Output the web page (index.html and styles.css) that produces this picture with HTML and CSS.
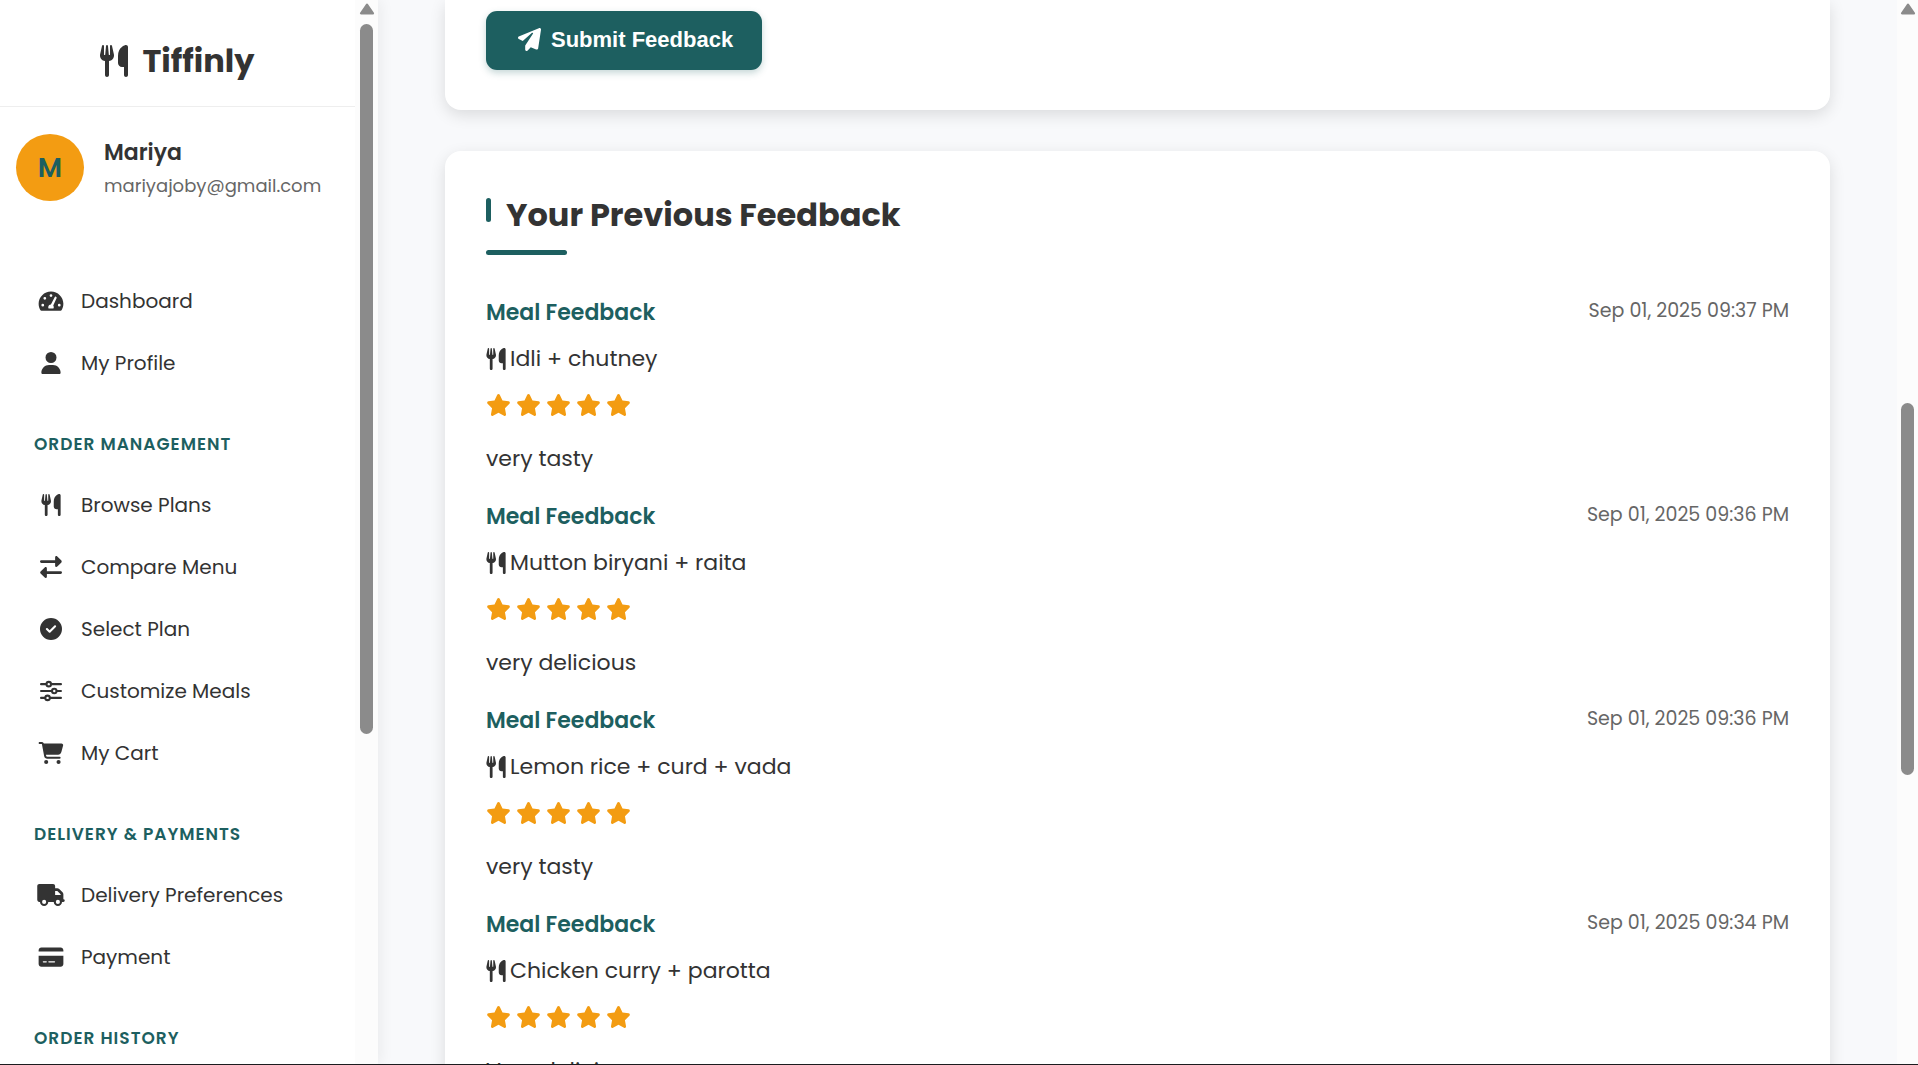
FILE: index.html
```html
<!DOCTYPE html>
<html lang="en">
<head>
<meta charset="utf-8">
<title>Tiffinly - Feedback</title>
<link rel="stylesheet" href="styles.css">
</head>
<body>
<svg class="sprite" aria-hidden="true">
  <symbol id="utensils" viewBox="0 0 448 512"><path d="M416 0C400 0 288 32 288 176V288c0 35.300 28.700 64 64 64h32V480c0 17.700 14.300 32 32 32s32-14.300 32-32V32c0-17.700-14.300-32-32-32zM64 16C64 7.800 57.900 1 49.700 .1S34.200 4.600 32.400 12.500L2.100 148.800C.7 155.100 0 161.500 0 167.900c0 45.900 35.100 83.600 80 87.700V480c0 17.700 14.300 32 32 32s32-14.300 32-32V255.600c44.900-4.100 80-41.800 80-87.700c0-6.400-.7-12.800-2.100-19.100L191.600 12.500c-1.800-8-9.300-13.300-17.400-12.400S160 7.800 160 16V150.200c0 5.400-4.400 9.800-9.800 9.800c-5.100 0-9.300-3.900-9.800-9L127.900 14.600C127.200 6.300 120.300 0 112 0s-15.200 6.300-15.900 14.600L83.700 151c-.5 5.100-4.700 9-9.800 9c-5.400 0-9.800-4.400-9.800-9.800V16z"/></symbol>
  <symbol id="gauge" viewBox="0 0 576 512"><path fill-rule="evenodd" d="M288 32C129 32 0 161 0 320c0 53 14 102 39 145 6 10 16 15 27 15h444c11 0 21-5 27-15 25-43 39-92 39-145C576 161 447 32 288 32zm0 64a32 32 0 1 1 0 64 32 32 0 0 1 0-64zM96 384a32 32 0 1 1 0-64 32 32 0 0 1 0 64zm48-160a32 32 0 1 1 0-64 32 32 0 0 1 0 64zm336 96a32 32 0 1 1 0 64 32 32 0 0 1 0-64zM404 157c13 6 19 20 13 33l-77 172c8 10 12 22 12 38 0 12-3 22-9 32H233c-6-10-9-20-9-32 0-34 27-62 62-64l87-170c6-12 19-15 31-9z"/></symbol>
  <symbol id="user" viewBox="0 0 448 512"><path d="M224 256a128 128 0 1 0 0-256 128 128 0 0 0 0 256zm-46 48C80 304 0 384 0 482c0 17 13 30 30 30h388c17 0 30-13 30-30 0-98-80-178-178-178z"/></symbol>
  <symbol id="exchange" viewBox="0 0 512 512"><path d="M32 96h320V32c0-26 32-39 50-22l96 96c9 9 9 35 0 44l-96 96c-18 17-50 5-50-22v-64H32a32 32 0 0 1 0-64zM480 352H160v-64c0-26-32-39-50-22l-96 96c-13 13-13 31 0 44l96 96c18 17 50 5 50-22v-64h320a32 32 0 0 0 0-64z"/></symbol>
  <symbol id="check" viewBox="0 0 512 512"><path fill-rule="evenodd" d="M256 512a256 256 0 1 0 0-512 256 256 0 0 0 0 512zm113-303L241 337c-9 9-25 9-34 0l-64-64c-22-23 11-56 34-34l47 47 111-111c23-22 56 11 34 34z"/></symbol>
  <symbol id="sliders" viewBox="0 0 512 512"><g fill="none" stroke="currentColor" stroke-width="48" stroke-linecap="round"><path d="M24 96h112M272 96h216M24 256h240M400 256h88M24 416h88M240 416h248"/><circle cx="204" cy="96" r="52"/><circle cx="332" cy="256" r="52"/><circle cx="176" cy="416" r="52"/></g></symbol>
  <symbol id="cart" viewBox="0 0 576 512"><path d="M0 24C0 11 11 0 24 0h46c22 0 42 13 51 32h411c26 0 45 25 38 50l-41 152c-9 36-41 61-77 61H171l5 29c2 11 12 19 24 19h288a24 24 0 0 1 0 48H200c-35 0-65-25-71-58L77 54c-1-4-4-6-7-6H24C11 48 0 37 0 24zM128 464a48 48 0 1 1 96 0 48 48 0 0 1-96 0zm288 0a48 48 0 1 1 96 0 48 48 0 0 1-96 0z"/></symbol>
  <symbol id="truck" viewBox="0 0 640 512"><path fill-rule="evenodd" d="M48 0h320c27 0 48 21 48 48v48h51c17 0 33 7 45 19l77 77c12 12 19 28 19 45v115a32 32 0 0 1 0 64h-32a96 96 0 0 1-192 0H256a96 96 0 0 1-192 0H48c-27 0-48-21-48-48V48C0 21 21 0 48 0zm368 160v96h128v-19l-77-77zM160 368a48 48 0 1 0 0 96 48 48 0 0 0 0-96zm320 0a48 48 0 1 0 0 96 48 48 0 0 0 0-96z"/></symbol>
  <symbol id="card" viewBox="0 0 576 512"><path fill-rule="evenodd" d="M64 32h448c35 0 64 29 64 64v32H0V96c0-35 29-64 64-64zM0 224h576v192c0 35-29 64-64 64H64c-35 0-64-29-64-64zm112 128a16 16 0 0 0 0 32h64a16 16 0 0 0 0-32zm128 0a16 16 0 0 0 0 32h128a16 16 0 0 0 0-32z"/></symbol>
  <symbol id="plane" viewBox="0 0 512 512"><path d="M498 6c11 7 16 19 14 32l-64 416c-3 20-25 32-44 24l-120-50-68 74c-20 22-56 8-56-22v-83c0-4 2-8 4-11L332 128c13-14-6-32-20-20L106 291 17 246C6 241 0 230 0 219c0-12 6-22 16-28L464 4c11-6 24-6 34 2z"/></symbol>
  <symbol id="star" viewBox="0 0 576 512"><path d="M317 18c-5-11-16-18-29-18s-23 7-29 18l-64 132-143 21c-12 2-22 10-26 22-4 11-1 24 8 33l104 103-25 145c-2 12 3 24 13 31s23 8 34 2l128-68 128 68c11 6 24 5 34-2s15-19 13-31l-25-145 104-103c9-9 12-22 8-33-4-12-14-20-26-22l-143-21z"/></symbol>
</svg>

<div class="app">
  <aside class="sidebar">
    <div class="sidebar-content">
      <div class="brand"><svg class="brand-icon"><use href="#utensils"/></svg><span>Tiffinly</span></div>
      <div class="profile">
        <div class="avatar">M</div>
        <div class="profile-text">
          <div class="profile-name">Mariya</div>
          <div class="profile-mail">mariyajoby@gmail.com</div>
        </div>
      </div>
      <nav class="menu">
        <a class="menu-item" href="#"><svg class="menu-icon"><use href="#gauge"/></svg>Dashboard</a>
        <a class="menu-item" href="#"><svg class="menu-icon"><use href="#user"/></svg>My Profile</a>
        <h3 class="menu-title">Order Management</h3>
        <a class="menu-item" href="#"><svg class="menu-icon"><use href="#utensils"/></svg>Browse Plans</a>
        <a class="menu-item" href="#"><svg class="menu-icon"><use href="#exchange"/></svg>Compare Menu</a>
        <a class="menu-item" href="#"><svg class="menu-icon"><use href="#check"/></svg>Select Plan</a>
        <a class="menu-item" href="#"><svg class="menu-icon"><use href="#sliders"/></svg>Customize Meals</a>
        <a class="menu-item" href="#"><svg class="menu-icon"><use href="#cart"/></svg>My Cart</a>
        <h3 class="menu-title">Delivery &amp; Payments</h3>
        <a class="menu-item" href="#"><svg class="menu-icon"><use href="#truck"/></svg>Delivery Preferences</a>
        <a class="menu-item" href="#"><svg class="menu-icon"><use href="#card"/></svg>Payment</a>
        <h3 class="menu-title">Order History</h3>
      </nav>
    </div>
    <div class="scrollbar scrollbar-side" aria-hidden="true">
      <svg class="scroll-arrow" viewBox="0 0 14 11"><path d="M7 1.500L12.500 9.500H1.500z"/></svg>
      <div class="thumb-area"><div class="thumb"></div></div>
    </div>
  </aside>

  <main class="main">
    <section class="card card-form">
      <button class="submit" type="button"><svg class="submit-icon"><use href="#plane"/></svg>Submit Feedback</button>
    </section>
    <section class="card card-history">
      <h2 class="card-title">Your Previous Feedback</h2>
      <article class="feedback">
        <header class="feedback-head"><h4 class="feedback-type">Meal Feedback</h4><time class="feedback-date">Sep 01, 2025 09:37 PM</time></header>
        <div class="meal"><svg class="meal-icon"><use href="#utensils"/></svg>Idli + chutney</div>
        <div class="stars" role="img" aria-label="5 of 5"><svg class="star"><use href="#star"/></svg><svg class="star"><use href="#star"/></svg><svg class="star"><use href="#star"/></svg><svg class="star"><use href="#star"/></svg><svg class="star"><use href="#star"/></svg></div>
        <p class="comment">very tasty</p>
      </article>
      <article class="feedback">
        <header class="feedback-head"><h4 class="feedback-type">Meal Feedback</h4><time class="feedback-date">Sep 01, 2025 09:36 PM</time></header>
        <div class="meal"><svg class="meal-icon"><use href="#utensils"/></svg>Mutton biryani + raita</div>
        <div class="stars" role="img" aria-label="5 of 5"><svg class="star"><use href="#star"/></svg><svg class="star"><use href="#star"/></svg><svg class="star"><use href="#star"/></svg><svg class="star"><use href="#star"/></svg><svg class="star"><use href="#star"/></svg></div>
        <p class="comment">very delicious</p>
      </article>
      <article class="feedback">
        <header class="feedback-head"><h4 class="feedback-type">Meal Feedback</h4><time class="feedback-date">Sep 01, 2025 09:36 PM</time></header>
        <div class="meal"><svg class="meal-icon"><use href="#utensils"/></svg>Lemon rice + curd + vada</div>
        <div class="stars" role="img" aria-label="5 of 5"><svg class="star"><use href="#star"/></svg><svg class="star"><use href="#star"/></svg><svg class="star"><use href="#star"/></svg><svg class="star"><use href="#star"/></svg><svg class="star"><use href="#star"/></svg></div>
        <p class="comment">very tasty</p>
      </article>
      <article class="feedback">
        <header class="feedback-head"><h4 class="feedback-type">Meal Feedback</h4><time class="feedback-date">Sep 01, 2025 09:34 PM</time></header>
        <div class="meal"><svg class="meal-icon"><use href="#utensils"/></svg>Chicken curry + parotta</div>
        <div class="stars" role="img" aria-label="5 of 5"><svg class="star"><use href="#star"/></svg><svg class="star"><use href="#star"/></svg><svg class="star"><use href="#star"/></svg><svg class="star"><use href="#star"/></svg><svg class="star"><use href="#star"/></svg></div>
        <p class="comment">Very delicious</p>
      </article>
    </section>
  </main>

  <div class="scrollbar scrollbar-page" aria-hidden="true">
    <svg class="scroll-arrow" viewBox="0 0 14 11"><path d="M7 1.500L12.500 9.500H1.500z"/></svg>
    <div class="thumb-area"><div class="thumb"></div></div>
  </div>
</div>
</body>
</html>
```
FILE: styles.css
```css
:root {
  --teal: #1d5f60;
  --amber: #f39c12;
  --ink: #333;
  --muted: #666;
}

* { box-sizing: border-box; }

body {
  margin: 0;
  font-family: Poppins, Inter, "Open Sans", sans-serif;
  font-size: 22px;
  line-height: 36px;
  color: var(--ink);
  background: #f8f9fb;
}

h2, h3, h4, p { margin: 0; }

svg { display: block; flex: none; fill: currentColor; }

.sprite { display: none; }

.app {
  display: flex;
  height: 100vh;
  overflow: hidden;
  border-bottom: 1px solid #1c1c1f;
}

/* Sidebar */
.sidebar {
  display: flex;
  flex: none;
  width: 378px;
  background: #fff;
  box-shadow: 3px 0 13px rgba(0, 0, 0, 0.06);
}

.sidebar-content { flex: 1; min-width: 0; overflow: hidden; }

.brand {
  display: flex;
  align-items: center;
  justify-content: center;
  gap: 14px;
  height: 107px;
  padding-top: 16px;
  border-bottom: 1px solid #eee;
  font-size: 32px;
  font-weight: 700;
}

.brand-icon { width: 28px; height: 32px; }

.profile {
  display: flex;
  align-items: center;
  gap: 20px;
  padding: 26px 16px;
}

.avatar {
  display: flex;
  align-items: center;
  justify-content: center;
  flex: none;
  width: 68px;
  height: 67px;
  border-radius: 50%;
  background: var(--amber);
  color: var(--teal);
  font-size: 27px;
  font-weight: 600;
}

.profile-text { padding-top: 3px; }

.profile-name { font-weight: 600; line-height: 34px; }

.profile-mail { font-size: 18px; line-height: 32px; color: var(--muted); }

.menu { padding-top: 42px; }

.menu-item {
  display: flex;
  align-items: center;
  gap: 16px;
  height: 62px;
  padding-left: 37px;
  color: inherit;
  font-size: 20px;
  text-decoration: none;
}

.menu-icon { width: 28px; height: 22px; }

.menu-title {
  padding: 33px 34px 12px;
  color: var(--teal);
  font-size: 17px;
  font-weight: 600;
  line-height: 35px;
  letter-spacing: 1px;
  text-transform: uppercase;
}

/* Scrollbars */
.scrollbar {
  display: flex;
  flex: none;
  flex-direction: column;
  align-items: center;
  background: #fcfcfc;
  color: #8b8b8b;
}

.scrollbar-side { width: 23px; }

.scrollbar-page { width: 21px; }

.scroll-arrow {
  width: 16px;
  height: 12px;
  margin: 3px 0 9px;
  stroke: currentColor;
  stroke-width: 2;
  stroke-linejoin: round;
}

.thumb-area { flex: 1; width: 13px; }

.thumb { border-radius: 7px; background: #8b8b8b; }

.scrollbar-side .thumb { height: 68.3%; }

.scrollbar-page .thumb-area { display: flex; flex-direction: column; }

.scrollbar-page .thumb-area::before { content: ""; height: 36.4%; }

.scrollbar-page .thumb { height: 35.8%; }

/* Feedback cards */
.main {
  display: flex;
  flex: 1;
  flex-direction: column;
  gap: 41px;
  min-width: 0;
  padding: 0 67px;
}

.card {
  flex: none;
  padding: 40px 41px;
  border-radius: 16px;
  background: #fff;
  box-shadow: 0 5px 16px rgba(0, 0, 0, 0.12);
}

.card-form {
  padding-top: 11px;
  border-radius: 0 0 16px 16px;
}

.submit {
  display: flex;
  align-items: center;
  gap: 10px;
  height: 59px;
  padding: 0 29px 2px 32px;
  border: 0;
  border-radius: 11px;
  background: var(--teal);
  box-shadow: 0 3px 7px rgba(29, 95, 96, 0.25);
  color: #fff;
  font: 700 22px/26px "Liberation Sans", Arial, sans-serif;
}

.submit-icon { width: 23px; height: 23px; }

.card-title {
  position: relative;
  padding: 2px 0 21px 20px;
  font-size: 32px;
  font-weight: 700;
  line-height: 43px;
}

.card-title::before,
.card-title::after {
  content: "";
  position: absolute;
  left: 0;
  border-radius: 3px;
  background: var(--teal);
}

.card-title::before { top: 7px; width: 5px; height: 24px; }

.card-title::after { bottom: 2px; width: 81px; height: 5px; }

.card-title + .feedback { margin-top: 36px; }

.feedback { height: 204px; }

.feedback-head { display: flex; justify-content: space-between; }

.feedback-type { color: var(--teal); font-size: 22px; font-weight: 600; line-height: 40px; }

.feedback-date { color: var(--muted); font-size: 19px; }

.meal { display: flex; align-items: center; gap: 4px; padding-top: 8px; font-size: 22px; }

.meal-icon { width: 20px; height: 22px; }

.stars { display: flex; gap: 5px; padding: 17px 0; color: var(--amber); }

.star { width: 25px; height: 22px; }

.comment { padding-top: 8px; }
```
